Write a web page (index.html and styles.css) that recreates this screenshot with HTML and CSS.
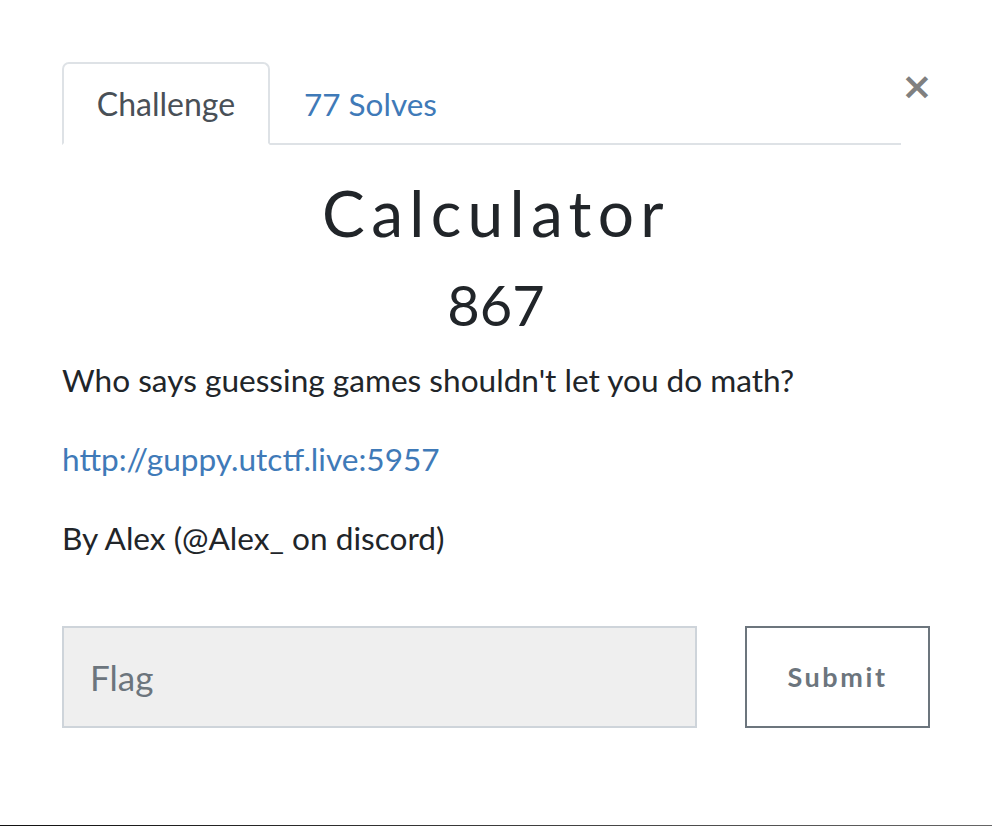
FILE: index.html
```html
<!DOCTYPE html>
<html lang="en">
<head>
<meta charset="utf-8">
<title>Calculator</title>
<link rel="stylesheet" href="styles.css">
</head>
<body>
<div class="screen">
  <div class="modal">
    <div class="head">
      <ul class="tabs">
        <li class="tab active">Challenge</li>
        <li class="tab"><a href="#">77 Solves</a></li>
      </ul>
      <button class="close" aria-label="Close">&times;</button>
    </div>
    <h2 class="title">Calculator</h2>
    <h3 class="value">867</h3>
    <div class="desc">
      <p>Who says guessing games shouldn't let you do math?</p>
      <p><a href="#">http://guppy.utctf.live:5957</a></p>
      <p>By Alex (@Alex_ on discord)</p>
    </div>
    <form class="submit-row">
      <input class="flag" type="text" placeholder="Flag">
      <button class="btn" type="button">Submit</button>
    </form>
  </div>
</div>
</body>
</html>
```
FILE: styles.css
```css
html, body {
  margin: 0;
  padding: 0;
  background: #fff;
}
body {
  font-family: Lato, "Open Sans", "Liberation Sans", sans-serif;
  color: #212529;
}
.screen {
  height: 825px;
  border-bottom: 1px solid #333;
  border-image: linear-gradient(to right, #111, #666) 1;
  box-sizing: content-box;
  overflow: hidden;
}
.modal {
  padding: 62px 62px 0 62px;
}
.head {
  display: flex;
  align-items: flex-start;
}
.tabs {
  list-style: none;
  margin: 0;
  padding: 0;
  display: flex;
  flex: 1;
  border-bottom: 2px solid #dee2e6;
  height: 83px;
  box-sizing: border-box;
}
.tab {
  font-size: 32px;
  line-height: 1;
  padding: 24px 34px 0 34px;
  margin-bottom: -2px;
  border: 2px solid transparent;
  border-radius: 7px 7px 0 0;
}
.tab.active {
  color: #495057;
  border-color: #dee2e6 #dee2e6 #fff;
  background: #fff;
  width: 208px;
  box-sizing: border-box;
  text-align: center;
  padding-left: 0;
  padding-right: 0;
}
.tab a {
  color: #3f7ab8;
  text-decoration: none;
  font-size: 31.5px;
  margin-left: -2px;
}
.close {
  border: 0;
  background: none;
  padding: 0;
  margin: 5px 3px 0 0;
  width: 26px;
  font-family: "DejaVu Sans", sans-serif;
  font-size: 38px;
  font-weight: 700;
  line-height: 1;
  color: #808080;
}
.title {
  margin: 33px 0 0;
  text-align: center;
  font-weight: 400;
  font-size: 64px;
  letter-spacing: 6.3px;
  line-height: 1.1;
}
.value {
  margin: 26px 0 0;
  text-align: center;
  font-weight: 400;
  font-size: 56px;
  line-height: 1.1;
}
.desc {
  margin-top: 25px;
  font-size: 31.6px;
}
.desc p {
  margin: 0 0 41px;
  line-height: 38px;
}
.desc a {
  color: #3f7ab8;
  text-decoration: none;
}
.submit-row {
  display: flex;
  margin-top: 69px;
  gap: 48px;
}
.flag {
  flex: 1;
  height: 102px;
  box-sizing: border-box;
  background: #efefef;
  border: 2px solid #ced4da;
  padding: 0 26px;
  font-family: Lato, sans-serif;
  font-size: 35px;
  color: #495057;
  outline: none;
}
.flag::placeholder {
  color: #6c757d;
}
.btn {
  width: 185px;
  height: 102px;
  box-sizing: border-box;
  background: #fff;
  border: 2px solid #6c757d;
  font-family: Lato, sans-serif;
  font-weight: 700;
  font-size: 27px;
  letter-spacing: 2.6px;
  color: #6c757d;
}
```
